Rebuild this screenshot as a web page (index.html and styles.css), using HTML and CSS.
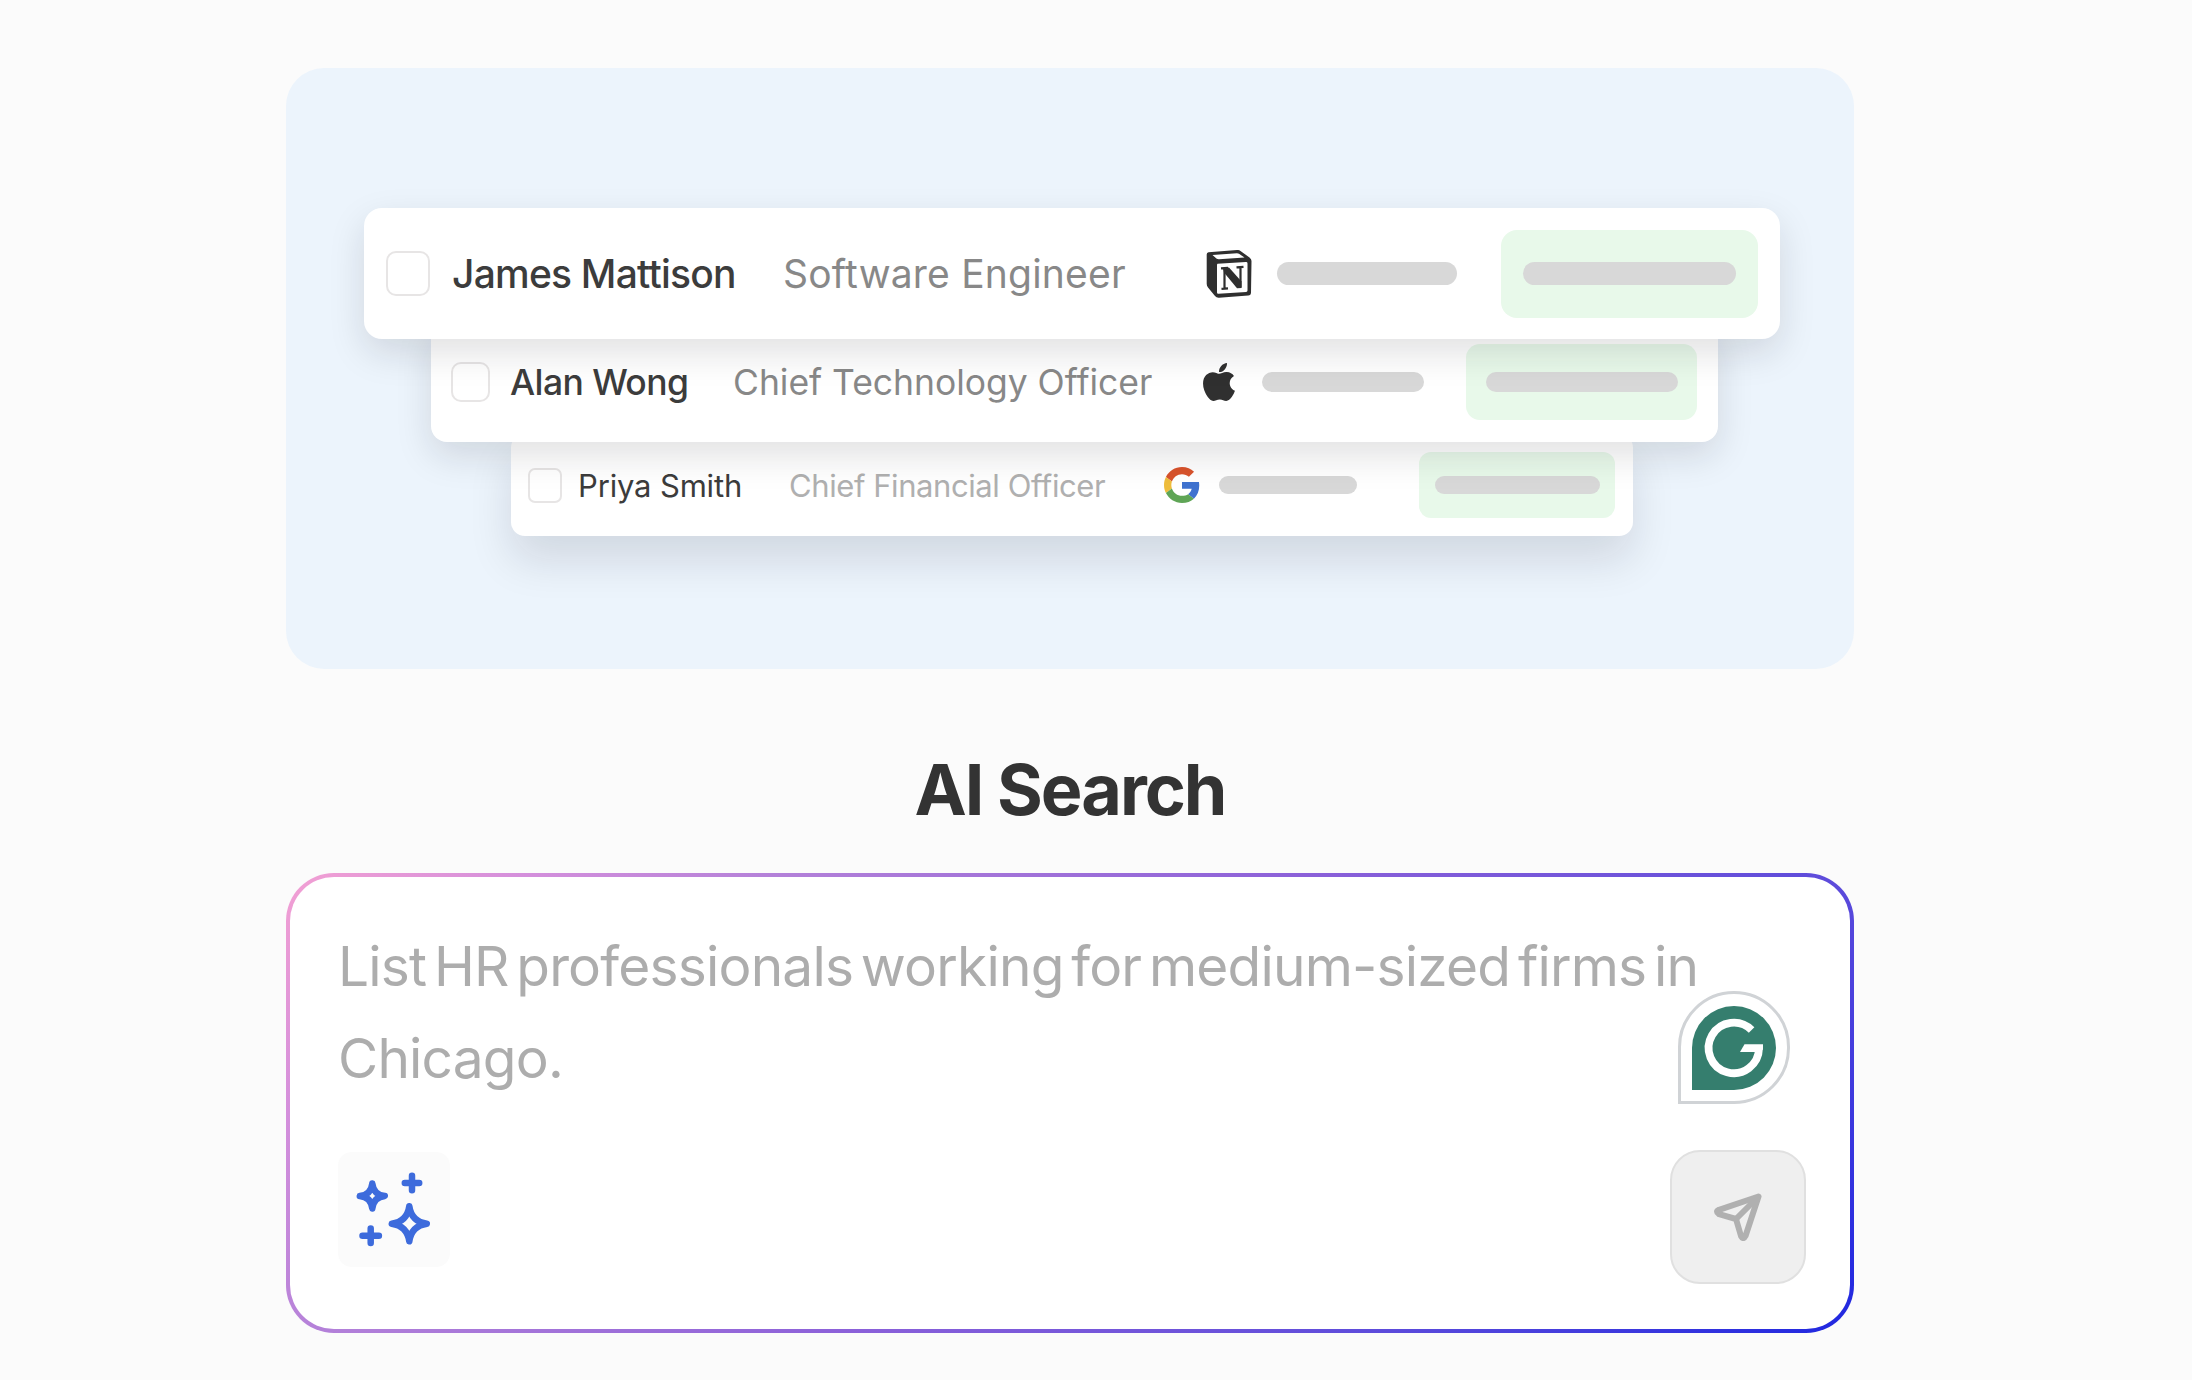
FILE: index.html
```
<!DOCTYPE html>
<html lang="en">
<head>
  <meta charset="UTF-8" />
  <meta name="viewport" content="width=device-width, initial-scale=1.0"/>
  <title>AI Search</title>
  <link rel="stylesheet" href="styles.css">
</head>
<body>
  <main class="page">
    <section class="hero">
      <div class="card card-lg">
        <span class="checkbox"></span>
        <span class="name">James Mattison</span>
        <span class="role">Software Engineer</span>
        <svg class="logo" viewBox="0 0 46 48">
          <path fill="#2f2f2f" d="M2.5 2.2 31 0q2-.2 3.500 1L43.500 7.500Q45.500 9 45.500 11L45 42.500q0 2.800-2.800 3L13 47.800q-2.500.2-4-1.700L2 37.500Q.7 35.800.7 33.700V4.400Q.7 2.400 2.500 2.200Z"/>
          <path fill="#fff" d="M6.500 5 31 3.200q1 0 2 .6L38.500 7.500 13 9.300q-1.500.1-2.600-.8ZM11.500 13.800 40 12q1.500-.1 1.500 1.400V40.500q0 1.400-1.400 1.500L12.400 43.800Q11 43.900 11 42.500V15.300q0-1.400.5-1.500Z"/>
          <path fill="none" stroke="#2f2f2f" stroke-width="2.200" d="M15 18.300 22 17.800M30.500 17.300 37.500 16.800M15.500 38.800 22 38.300M18.500 18V38.600M34.500 17V37.500"/>
          <path fill="#2f2f2f" d="M17 18 23 17.600 35.500 31.500V38L31 38.300 18 22.500Z"/>
        </svg>
        <span class="bar"></span>
        <span class="pill"><span class="bar"></span></span>
      </div>
      <div class="card card-md">
        <span class="checkbox"></span>
        <span class="name">Alan Wong</span>
        <span class="role">Chief Technology Officer</span>
        <svg class="logo" viewBox="4 32 376.500 448" fill="#303030">
          <path d="M318.700 268.700c-.2-36.700 16.400-64.400 50-84.800-18.800-26.900-47.200-41.700-84.700-44.600-35.500-2.800-74.300 20.700-88.500 20.700-15 0-49.400-19.700-76.400-19.700C63.300 141.200 4 184.800 4 273.500q0 39.300 14.400 81.200c12.800 36.700 59 126.700 107.200 125.200 25.200-.6 43-17.900 75.800-17.900 31.800 0 48.300 17.900 76.400 17.900 48.600-.7 90.400-82.500 102.600-119.300-65.200-30.700-61.700-90-61.700-91.900zm-56.600-164.200c27.300-32.400 24.800-61.900 24-72.500-24.100 1.400-52 16.400-67.900 34.900-17.500 19.800-27.800 44.300-25.600 71.900 26.100 2 49.900-11.400 69.500-34.300z"/>
        </svg>
        <span class="bar"></span>
        <span class="pill"><span class="bar"></span></span>
      </div>
      <div class="card card-sm">
        <span class="checkbox"></span>
        <span class="name">Priya Smith</span>
        <span class="role">Chief Financial Officer</span>
        <svg class="logo" viewBox="0 0 48 48">
          <path fill="#d9532c" d="M24 9.500c3.540 0 6.710 1.220 9.210 3.600l6.850-6.850C35.900 2.380 30.470 0 24 0 14.620 0 6.510 5.380 2.560 13.220l7.980 6.190C12.430 13.720 17.740 9.500 24 9.500z"/>
          <path fill="#3f72cf" d="M46.980 24.550c0-1.570-.15-3.090-.38-4.550H24v9.020h12.940c-.58 2.960-2.260 5.480-4.780 7.180l7.730 6c4.510-4.180 7.090-10.360 7.090-17.650z"/>
          <path fill="#efbd3c" d="M10.530 28.590c-.48-1.450-.76-2.990-.76-4.590s.27-3.140.76-4.590l-7.980-6.190C.92 16.460 0 20.120 0 24c0 3.880.92 7.540 2.560 10.780l7.970-6.190z"/>
          <path fill="#5fa556" d="M24 48c6.480 0 11.930-2.130 15.890-5.810l-7.730-6c-2.150 1.450-4.920 2.300-8.160 2.300-6.260 0-11.570-4.220-13.470-9.910l-7.980 6.190C6.510 42.620 14.620 48 24 48z"/>
        </svg>
        <span class="bar"></span>
        <span class="pill"><span class="bar"></span></span>
      </div>
    </section>

    <h1>AI Search</h1>

    <form class="prompt">
      <textarea rows="2" placeholder="List HR professionals working for medium-sized firms in Chicago."></textarea>
      <div class="actions">
        <button type="button" class="suggest" aria-label="Suggestions">
          <svg viewBox="0 0 76 76" fill="none" stroke="#3d6bdc" stroke-width="6.500" stroke-linecap="round" stroke-linejoin="round">
            <path d="M56 3.800V18.200M48.800 11H63.200M14.700 56.500V70.900M6.500 63.700H22.900"/>
            <path d="M16.300 11.500Q17.500 22.800 28.800 24 17.500 25.200 16.300 36.500 15.100 25.200 3.800 24 15.100 22.800 16.300 11.500Z"/>
            <path d="M53.300 34.200Q55.500 49.500 70.800 51.700 55.500 53.900 53.300 69.200 51.100 53.900 35.800 51.700 51.100 49.500 53.300 34.200Z"/>
          </svg>
        </button>
        <button type="submit" class="send" aria-label="Send">
          <svg viewBox="0 0 48 48" fill="none" stroke="#b0b0b0" stroke-width="6" stroke-linecap="round" stroke-linejoin="round">
            <path d="M44.500 3.500 5 16.800Q1 18.700 5 21.200L22 26 27 43Q29.300 47.300 31.500 43Z"/>
            <path d="M22 26 43 5"/>
          </svg>
        </button>
      </div>
      <div class="assistant">
        <svg viewBox="0 0 84 84">
          <path fill="#357e6e" d="M42 0A42 42 0 0 1 42 84H0V42A42 42 0 0 1 42 0Z"/>
          <path fill="none" stroke="#fff" stroke-width="7.800" d="M59.600 24.100A25.200 25.200 0 1 0 67 42.300"/>
          <path fill="#fff" d="M52.500 38.300H71V43.500L66 46H48Z"/>
        </svg>
      </div>
    </form>
  </main>
</body>
</html>
```
FILE: styles.css
```
* {
  box-sizing: border-box;
}
body {
  margin: 0;
  background-color: #fbfbfb;
  color: #333;
  font-family: Inter, sans-serif;
}
.page {
  width: 1568px;
  margin-left: 286px;
  padding-top: 68px;
}

/* hero illustration */
.hero {
  display: flex;
  flex-direction: column;
  height: 601px;
  padding-top: 140px;
  border-radius: 38px;
  background-color: #ecf4fc;
}
.card {
  display: grid;
  align-items: center;
  position: relative;
  flex-shrink: 0;
  background-color: #fff;
  white-space: nowrap;
}
.card-lg {
  z-index: 3;
  grid-template-columns: 67px 331px 422px 71px 224px 257px;
  width: 1416px;
  height: 131px;
  margin-left: 78px;
  padding-left: 22px;
  border-radius: 18px;
  font-size: 39px;
  box-shadow: 0 14px 36px rgba(20, 20, 30, 0.13);
}
.card-md {
  z-index: 2;
  grid-template-columns: 60px 223px 469px 59px 204px 231px;
  width: 1287px;
  height: 120px;
  margin: -17px 0 0 145px;
  padding-left: 20px;
  border-radius: 16px;
  font-size: 35.5px;
  box-shadow: 0 14px 36px rgba(20, 20, 30, 0.13);
}
.card-sm {
  z-index: 1;
  grid-template-columns: 51px 211px 374px 55px 200px 196px;
  width: 1122px;
  height: 102px;
  margin: -8px 0 0 225px;
  padding-left: 17px;
  border-radius: 14px;
  font-size: 31px;
  box-shadow: 0 24px 44px rgba(20, 20, 30, 0.12);
}
.checkbox {
  width: 44px;
  height: 45px;
  border: 2px solid #e7e5e5;
  border-radius: 10px;
}
.card-md .checkbox {
  width: 39px;
  height: 40px;
}
.card-sm .checkbox {
  width: 34px;
  height: 35px;
  border-radius: 7px;
}
.name {
  margin-left: -1px;
  color: #3c3c3c;
  font-weight: 500;
  letter-spacing: -0.78px;
}
.card-md .name {
  letter-spacing: -0.59px;
}
.card-sm .name {
  font-weight: 400;
  letter-spacing: -0.16px;
}
.role {
  margin-left: -1px;
  color: #888;
  letter-spacing: 0.2px;
}
.card-md .role {
  letter-spacing: -0.04px;
}
.card-sm .role {
  color: #b0b0b0;
  letter-spacing: -0.42px;
}
.logo {
  width: 46px;
  height: 48px;
}
.card-md .logo {
  width: 32px;
  height: 38px;
}
.card-sm .logo {
  width: 36px;
  height: 36px;
}
.bar {
  width: 180px;
  height: 23px;
  border-radius: 12px;
  background-color: #d8d8d8;
}
.card-md .bar {
  width: 162px;
  height: 20px;
}
.card-sm .bar {
  width: 138px;
  height: 18px;
}
.pill {
  display: flex;
  align-items: center;
  justify-content: center;
  height: 88px;
  border-radius: 16px;
  background-color: #e8f9ea;
}
.card-md .pill {
  height: 76px;
  border-radius: 14px;
}
.card-sm .pill {
  height: 66px;
  border-radius: 12px;
}
.pill .bar {
  width: 213px;
}
.card-md .pill .bar {
  width: 192px;
}
.card-sm .pill .bar {
  width: 165px;
}

h1 {
  margin: 81px 0 43px;
  font-size: 70px;
  font-weight: 700;
  line-height: 80px;
  letter-spacing: -2px;
  text-align: center;
}

/* prompt box */
.prompt {
  position: relative;
  height: 460px;
  padding: 43px 44px 0 48px;
  border: 4px solid transparent;
  border-radius: 48px;
  background:
    linear-gradient(#fff, #fff) padding-box,
    linear-gradient(135deg, #f3a0d3 0%, #d48fdc 12%, #b481d9 24%, #8c61d9 50%, #5c4bdb 77%, #1f27e0 100%) border-box;
}
textarea {
  display: block;
  width: 1440px;
  height: 184px;
  margin: 0 0 46px;
  padding: 0;
  border: none;
  outline: none;
  resize: none;
  overflow: hidden;
  background: none;
  font-family: inherit;
  font-size: 55px;
  line-height: 92px;
  letter-spacing: -0.8px;
  word-spacing: -7px;
}
textarea::placeholder {
  color: #adadad;
}
.actions {
  display: flex;
  align-items: flex-start;
  justify-content: space-between;
}
button {
  display: flex;
  align-items: center;
  justify-content: center;
  padding: 0;
  border: none;
  cursor: pointer;
}
.suggest {
  width: 112px;
  height: 115px;
  margin-top: 2px;
  border-radius: 14px;
  background-color: #fbfbfb;
}
.suggest svg {
  width: 76px;
  height: 76px;
}
.send {
  width: 136px;
  height: 134px;
  border: 2px solid #e0e0e0;
  border-radius: 30px;
  background-color: #efefef;
}
.send svg {
  width: 48px;
  height: 48px;
}
.assistant {
  position: absolute;
  top: 114px;
  right: 60px;
  display: flex;
  align-items: center;
  justify-content: center;
  width: 112px;
  height: 113px;
  border: 3px solid #d0d3d6;
  border-radius: 56px 56px 56px 0;
  background-color: #fff;
}
.assistant svg {
  width: 84px;
  height: 84px;
}
```
